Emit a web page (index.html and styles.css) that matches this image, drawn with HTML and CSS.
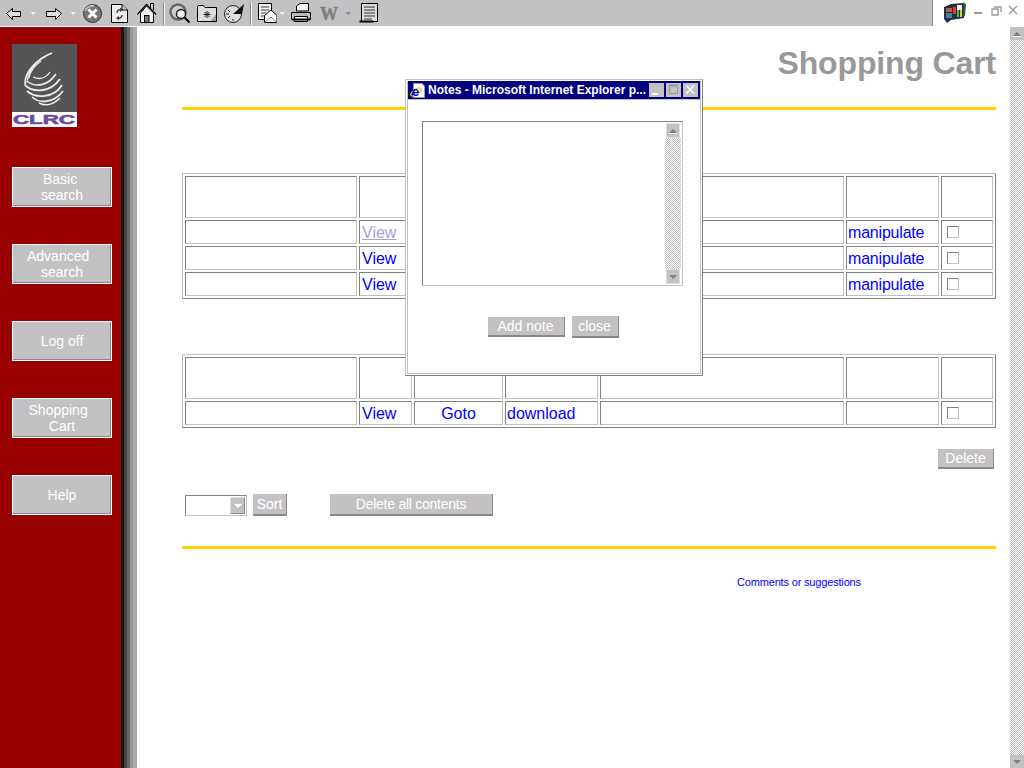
FILE: index.html

```html
<!DOCTYPE html>
<html>
	<head>
		<meta http-equiv="Content-Type" content="text/html; charset=utf-8" />
		<title>Shopping Cart</title>
		<link rel="stylesheet" href="styles.css">
	</head>
	<body>
		<!-- browser toolbar, each svg's viewBox uses page x so icons are easy to line up -->
		<div class="toolbar">
			<div class="tools">
				<svg width="24" height="26" viewBox="0 0 24 26"><path d="M6.5 13.5 12.5 8.5V11.5H20.5V16.5H12.5V19.5Z" fill="#dedede" stroke="#000"/></svg>
				<svg width="16" height="26" viewBox="24 0 16 26"><path d="M30.5 12H36L33.2 15Z" fill="#eee"/></svg>
				<svg width="26" height="26" viewBox="40 0 26 26"><path d="M61.5 13.5 55.5 8.5V11.5H46.5V16.5H55.5V19.5Z" fill="#dedede" stroke="#000"/></svg>
				<svg width="14" height="26" viewBox="66 0 14 26"><path d="M70.5 12H76L73.2 15Z" fill="#eee"/></svg>
				<svg width="26" height="26" viewBox="80 0 26 26"><circle cx="92.5" cy="13.5" r="9" fill="#777" stroke="#333"/><path d="M85 11a8 8 0 0 1 9-5" fill="none" stroke="#bbb" stroke-width="2"/><path d="M88.5 9.5 96.5 17.5M96.5 9.5 88.5 17.5" stroke="#fff" stroke-width="3"/></svg>
				<svg width="27" height="26" viewBox="106 0 27 26"><path d="M111.5 4.5H122L127.5 10V22.5H111.5Z" fill="#eee" stroke="#000"/><path d="M122 4.5V10H127.5" fill="#ccc" stroke="#000"/><path d="M117 13a3 3 0 0 1 4-3M122 15a3 3 0 0 1-4 3" fill="none" stroke="#444" stroke-width="1.5"/><path d="M120 7.5 123 10 120 12ZM119 16 116 18 119 20.5Z" fill="#444"/></svg>
				<svg width="30" height="26" viewBox="133 0 30 26"><path d="M150.5 8V3.5H153.5V10" fill="#ccc" stroke="#000"/><path d="M137.5 14.5 146.5 4.5 156 14.5" fill="#fff" stroke="#000" stroke-width="1.3"/><path d="M140.5 13V22.5H153.5V13L146.5 6Z" fill="#f2f2f2" stroke="#000"/><rect x="144.5" y="15.5" width="4.5" height="7" fill="#777" stroke="#000"/></svg>
				<div class="tool-sep"></div>
				<svg width="32" height="26" viewBox="165 0 32 26"><circle cx="178" cy="12" r="7.5" fill="#ccc" stroke="#666" stroke-width="2.5"/><circle cx="181" cy="14" r="4.5" fill="#f4f4f4" stroke="#222" stroke-width="1.5"/><path d="M184.5 17.5 189.5 22.5" stroke="#000" stroke-width="2"/></svg>
				<svg width="27" height="26" viewBox="197 0 27 26"><path d="M197.5 9.5V21.5H216.5V7.5H205L203.5 5.5H198.5L197.5 7Z" fill="#ddd" stroke="#000"/><path d="M207 11V18M203.5 14.5H210.5M204.5 12 209.5 17M209.5 12 204.5 17" stroke="#222"/><path d="M211 21 216 14V21Z" fill="#999"/></svg>
				<svg width="26" height="26" viewBox="224 0 26 26"><circle cx="233" cy="14" r="8.5" fill="#ddd" stroke="#222"/><path d="M233 14 244 4 242 14Z" fill="#111"/><path d="M226 14H229M233 19V21M228 10l2 2M228 18l2-2" stroke="#222"/></svg>
				<div class="tool-sep"></div>
				<svg width="25" height="26" viewBox="252 0 25 26"><path d="M258.5 3.5H271.5V19.5H258.5Z" fill="#eee" stroke="#000"/><path d="M261 7H269M261 10H269M261 13H266M261 16H264" stroke="#444"/><path d="M264.5 15.5 271 10 277 15.5V22.5H264.5Z" fill="#fff" stroke="#000"/><path d="M264.5 22.5 271 17 277 22.5" fill="none" stroke="#777"/></svg>
				<svg width="11" height="26" viewBox="277 0 11 26"><path d="M279.5 12H285L282.2 15Z" fill="#eee"/></svg>
				<svg width="27" height="26" viewBox="288 0 27 26"><path d="M296.5 11V6L300 3.5H308.5V11Z" fill="#f4f4f4" stroke="#000"/><path d="M291.5 12.5H310.5V19.5H291.5Z" fill="#bbb" stroke="#000"/><path d="M294.5 16.5H307.5V21.5H294.5Z" fill="#fff" stroke="#000"/><path d="M292 19.5H310" stroke="#000" stroke-width="2"/></svg>
				<svg width="28" height="26" viewBox="315 0 28 26"><text x="320" y="20" class="word-glyph">W</text></svg>
				<svg width="14" height="26" viewBox="343 0 14 26"><path d="M345.5 12H351L348.2 15Z" fill="#888"/></svg>
				<svg width="24" height="26" viewBox="357 0 24 26"><path d="M361.5 3.5H377.5V21.5H361.5Z" fill="#ddd" stroke="#000"/><path d="M359.5 21.5H373.5" stroke="#000" stroke-width="2"/><path d="M364 7H375M364 10H375M364 13H375M364 16H375M364 19H372" stroke="#333"/></svg>
			</div>
			<div class="toolbar-right">
				<svg width="24" height="22" viewBox="0 0 24 22"><path d="M2 5 9 2 21 1 23 3 22 16 9 18 5 21 2 17Z" fill="#23313f"/><rect x="4" y="6" width="6" height="4" fill="#b55b4e"/><rect x="4" y="11" width="6" height="5" fill="#4d7aa8"/><rect x="11" y="5" width="3" height="7" fill="#e33"/><rect x="15" y="3" width="5" height="5" fill="#eee"/><rect x="15" y="8" width="2" height="7" fill="#3c3"/><rect x="18" y="8" width="2" height="7" fill="#dc3"/><path d="M21 1 23 3 22 14" fill="none" stroke="#264" stroke-width="2"/></svg>
				<svg width="59" height="16" viewBox="0 0 59 16"><path d="M8 10H16" stroke="#999" stroke-width="2"/><path d="M28 4H35V9M26 6H32V12H26Z" fill="none" stroke="#999" stroke-width="1.3"/><path d="M43 3 51 11M51 3 43 11" stroke="#999" stroke-width="1.3"/></svg>
			</div>
		</div>

		<div class="page">
			<div class="sidebar">
				<svg class="logo" width="65" height="83" viewBox="12 44 65 83">
					<rect x="12" y="44" width="65" height="68" fill="#555"/>
					<rect x="12" y="112" width="65" height="15" fill="#fff"/>
					<g fill="none" stroke="#eee">
						<path d="M52 53C37 59 24 72 25 85" stroke-width="1.6"/>
						<path d="M46 56C35 62 28 72 27 83" stroke-width="1.4"/>
						<path d="M41 61C34 66 30 72 29 78" stroke-width="1.2"/>
						<path d="M33 77C40 80 46 78 50 72" stroke-width="1.3"/>
						<path d="M27 81C35 88 48 86 56 74" stroke-width="1.6"/>
						<path d="M25 85C33 93 50 93 60 79" stroke-width="1.8"/>
						<path d="M27 91C36 99 54 98 62 85" stroke-width="1.8"/>
						<path d="M32 97C40 104 54 103 63 91" stroke-width="1.6"/>
						<path d="M39 103C45 106 52 106 60 98" stroke-width="1.4"/>
					</g>
					<text x="13" y="124" textLength="62" lengthAdjust="spacingAndGlyphs" class="logo-text">CLRC</text>
				</svg>
				<button class="nav-btn">Basic&nbsp;<br>search</button>
				<button class="nav-btn">Advanced&nbsp;&nbsp;<br>search</button>
				<button class="nav-btn">Log off</button>
				<button class="nav-btn">Shopping&nbsp;&nbsp;<br>Cart</button>
				<button class="nav-btn">Help</button>
			</div>
			<div class="sidebar-edge"></div>

			<div class="main">
				<h1 class="title">Shopping Cart</h1>
				<div class="rule"></div>

				<table class="cart cart-first">
					<colgroup><col class="c1"><col class="c2"><col class="c3"><col class="c4"><col class="c5"><col class="c6"><col class="c7"></colgroup>
					<tr class="head"><td></td><td></td><td></td><td></td><td></td><td></td><td></td></tr>
					<tr><td></td><td class="view"><a href="#" class="visited">View</a></td><td></td><td></td><td></td><td><a href="#" class="manip">manipulate</a></td><td class="tick"><span class="box"></span></td></tr>
					<tr><td></td><td class="view"><a href="#">View</a></td><td></td><td></td><td></td><td><a href="#" class="manip">manipulate</a></td><td class="tick"><span class="box"></span></td></tr>
					<tr><td></td><td class="view"><a href="#">View</a></td><td></td><td></td><td></td><td><a href="#" class="manip">manipulate</a></td><td class="tick"><span class="box"></span></td></tr>
				</table>

				<table class="cart cart-second">
					<colgroup><col class="c1"><col class="c2"><col class="c3"><col class="c4"><col class="c5"><col class="c6"><col class="c7"></colgroup>
					<tr class="head"><td></td><td></td><td></td><td></td><td></td><td></td><td></td></tr>
					<tr><td></td><td class="view"><a href="#">View</a></td><td class="middle"><a href="#">Goto</a></td><td><a href="#">download</a></td><td></td><td></td><td class="tick"><span class="box"></span></td></tr>
				</table>

				<div class="delete-row"><button class="btn btn-delete">Delete</button></div>

				<div class="sort-row">
					<div class="select"><span class="select-arrow"></span></div>
					<button class="btn btn-sort">Sort</button>
					<button class="btn btn-all">Delete all contents</button>
				</div>

				<div class="rule rule-lower"></div>
				<div class="comments"><a href="#">Comments or suggestions</a></div>
			</div>

			<div class="scroll">
				<div class="scroll-btn"><span class="arrow-up"></span></div>
				<div class="scroll-track"></div>
				<div class="scroll-btn"><span class="arrow-down"></span></div>
			</div>
		</div>

		<!-- the popup window sits over the page -->
		<div class="dialog">
			<div class="dialog-inner">
				<div class="dialog-title">
					<svg width="17" height="17" viewBox="0 0 17 17"><path d="M4.5 1.5H13L15.5 4V15.5H4.5Z" fill="#fff" stroke="#999"/><ellipse cx="7" cy="10" rx="6" ry="2.5" transform="rotate(-35 7 10)" fill="none" stroke="#dc3" stroke-width="1.3"/><text x="3" y="14" class="ie-glyph">e</text></svg>
					<span class="dialog-name">Notes - Microsoft Internet Explorer p...</span>
					<span class="win-btn"><svg width="15" height="14" viewBox="0 0 15 14"><path d="M3 11H9" stroke="#fff" stroke-width="2"/></svg></span>
					<span class="win-btn win-max"><svg width="15" height="14" viewBox="0 0 15 14"><path d="M3.5 2.5H11.5V10.5H3.5Z" fill="none" stroke="#999"/><path d="M3 2.5H12" stroke="#999" stroke-width="2"/></svg></span>
					<span class="win-btn win-close"><svg width="15" height="14" viewBox="0 0 15 14"><path d="M3.5 2.5 11 10.5M11 2.5 3.5 10.5" stroke="#fff" stroke-width="1.6"/></svg></span>
				</div>
				<div class="note-box">
					<div class="scroll note-scroll">
						<div class="scroll-btn"><span class="arrow-up"></span></div>
						<div class="scroll-track"></div>
						<div class="scroll-btn"><span class="arrow-down"></span></div>
					</div>
				</div>
				<div class="dialog-btns">
					<button class="btn btn-add">Add note</button>
					<button class="btn btn-close">close</button>
				</div>
			</div>
		</div>
	</body>
</html>
```

FILE: styles.css

```css
body {margin:0;width:1024px;height:768px;overflow:hidden;background:#fff;font-family:"Liberation Sans", Arial, sans-serif;}

/* browser chrome */
.toolbar {display:flex;height:26px;border-bottom:1px solid #fff;}
.tools {display:flex;flex:none;width:932px;background:#c3c1c3;border-right:1px solid #8a888a;}
.tools svg {display:block;flex:none;}
.tool-sep {flex:none;width:2px;height:22px;margin:3px 0 0 0;background:#8a888a;border-right:1px solid #fff;box-sizing:border-box;}
.word-glyph {font:bold 18px "Liberation Serif", serif;fill:#808080;stroke:#808080;stroke-width:.5;}
.toolbar-right {display:flex;flex:1;align-items:flex-start;padding:2px 0 0 9px;}
.toolbar-right svg:last-child {margin-top:1px;}

.page {display:flex;height:741px;}
.sidebar {flex:none;display:flex;flex-direction:column;align-items:flex-start;width:109px;padding:17px 0 0 12px;background:#990000;}
.logo {display:block;margin-bottom:40px;}
.logo-text {font:bold 13px "Liberation Sans", sans-serif;fill:#6b4c9a;stroke:#6b4c9a;stroke-width:.6;}
.sidebar-edge {flex:none;width:16px;background:linear-gradient(to right,#111 0 3px,#444 3px 6px,#666 6px 9px,#999 9px 12px,#aaa 12px 16px);}

.nav-btn, .btn {padding:0;color:#fff;background:#c3c1c3;border:0;font:14px "Liberation Sans", Arial, sans-serif;}
.nav-btn {width:100px;height:40px;margin-bottom:37px;line-height:16px;border:1px solid #fff;box-shadow:inset 0 -1px 0 #8a888a, inset -1px 0 0 #8a888a;box-sizing:border-box;}
.btn {border-right:1px solid #8a888a;border-bottom:2px solid #8a888a;box-sizing:border-box;}

/* page content */
.main {flex:1;padding:18px 14px 0 45px;min-width:0;}
.title {margin:0 0 25px 0;text-align:right;font:bold 32px/37px "Liberation Sans", Arial, sans-serif;letter-spacing:-.15px;color:#999;}
.rule {height:3px;background:#ffd200;}

.cart {width:814px;table-layout:fixed;border-collapse:separate;border-spacing:2px;border:1px solid;border-color:#c0c0c0 #808080 #808080 #c0c0c0;box-sizing:border-box;}
.cart-first {margin-top:63px;}
.cart-second {margin-top:55px;}
.cart td {height:24px;padding:1px 1px 0 1px;border:1px solid;border-color:#808080 #c0c0c0 #c0c0c0 #808080;box-sizing:border-box;font-size:16px;line-height:18px;}
.cart .head td {height:42px;}
.cart a {color:#0000ff;text-decoration:none;}
.cart a.visited {color:#a89fd6;text-decoration:underline;}
.cart a.manip {letter-spacing:-.2px;}
.cart .view {padding-left:2px;}
.cart .middle {text-align:center;}
.cart .tick {padding:0 0 0 5px;}
.box {display:block;width:12px;height:12px;border:1px solid;border-color:#808080 #c0c0c0 #c0c0c0 #808080;box-sizing:border-box;}
.c1 {width:172px;}
.c2 {width:53px;}
.c3 {width:89px;}
.c4 {width:93px;}
.c5 {width:244px;}
.c6 {width:93px;}
.c7 {width:52px;}

.delete-row {display:flex;justify-content:flex-end;margin:21px 2px 0 0;}
.btn-delete {width:56px;height:20px;}
.sort-row {display:flex;align-items:flex-start;margin:25px 0 0 3px;}
.select {display:flex;justify-content:flex-end;width:62px;height:21px;margin-top:1px;padding:1px;border:1px solid;border-color:#808080 #c0c0c0 #c0c0c0 #808080;box-sizing:border-box;}
.select-arrow {display:flex;align-items:center;justify-content:center;width:15px;background:#c3c1c3;border:1px solid;border-color:#dedede #8a888a #8a888a #dedede;box-sizing:border-box;}
.select-arrow:after {content:"";border:4px solid transparent;border-top-color:#fff;border-bottom:0;}
.btn-sort {width:34px;height:22px;margin-left:6px;}
.btn-all {width:163px;height:22px;margin-left:43px;letter-spacing:-.25px;}

.rule-lower {margin-top:30px;}
.comments {margin-top:27px;padding-left:555px;font-size:11px;line-height:13px;letter-spacing:-.17px;}
.comments a {color:#0000ff;text-decoration:none;}

/* scrollbars */
.scroll {flex:none;display:flex;flex-direction:column;width:14px;}
.scroll-track {flex:1;background:repeating-conic-gradient(#c0c0c0 0 25%, #fff 0 50%) 0 0 / 2px 2px;}
.scroll-btn {flex:none;display:flex;flex-direction:column;align-items:center;justify-content:center;height:13px;background:#c3c1c3;}
.arrow-up {border:4px solid transparent;border-bottom:4px solid #808080;border-top:0;box-shadow:0 1px 0 #fff;}
.arrow-down {border:4px solid transparent;border-top:4px solid #808080;border-bottom:0;box-shadow:0 -1px 0 #c3c1c3;}

/* popup */
.dialog {position:absolute;left:405px;top:79px;width:298px;height:297px;padding:1px;background:#fff;border:1px solid;border-color:#c0c0c0 #808080 #808080 #c0c0c0;box-sizing:border-box;}
.dialog-inner {height:100%;border:1px solid #c0c0c0;border-top:0;box-sizing:border-box;}
.dialog-title {display:flex;align-items:center;height:18px;padding:0 2px 0 1px;background:#000080;border-bottom:1px solid #c0c0c0;box-sizing:content-box;}
.dialog-title svg {display:block;flex:none;}
.dialog-name {flex:1;min-width:0;margin-left:2px;color:#fff;font-size:12px;font-weight:bold;white-space:nowrap;overflow:hidden;}
.ie-glyph {font:bold 13px "Liberation Sans", sans-serif;fill:#0000c8;}
.win-btn {flex:none;width:15px;height:14px;margin-left:2px;background:#c3c1c3;}
.note-box {display:flex;justify-content:flex-end;width:261px;height:165px;margin:21px 0 0 14px;padding:1px 1px 1px 0;border:1px solid;border-color:#808080 #c0c0c0 #c0c0c0 #808080;box-sizing:border-box;}
.note-scroll {width:16px;}
.note-scroll .scroll-btn {height:15px;margin:0 1px;border:1px solid #dedede;box-sizing:border-box;}
.dialog-btns {display:flex;justify-content:center;align-items:center;gap:7px;margin-top:30px;padding-right:2px;}
.btn-add {width:77px;height:20px;}
.btn-close {width:47px;height:22px;}
```
